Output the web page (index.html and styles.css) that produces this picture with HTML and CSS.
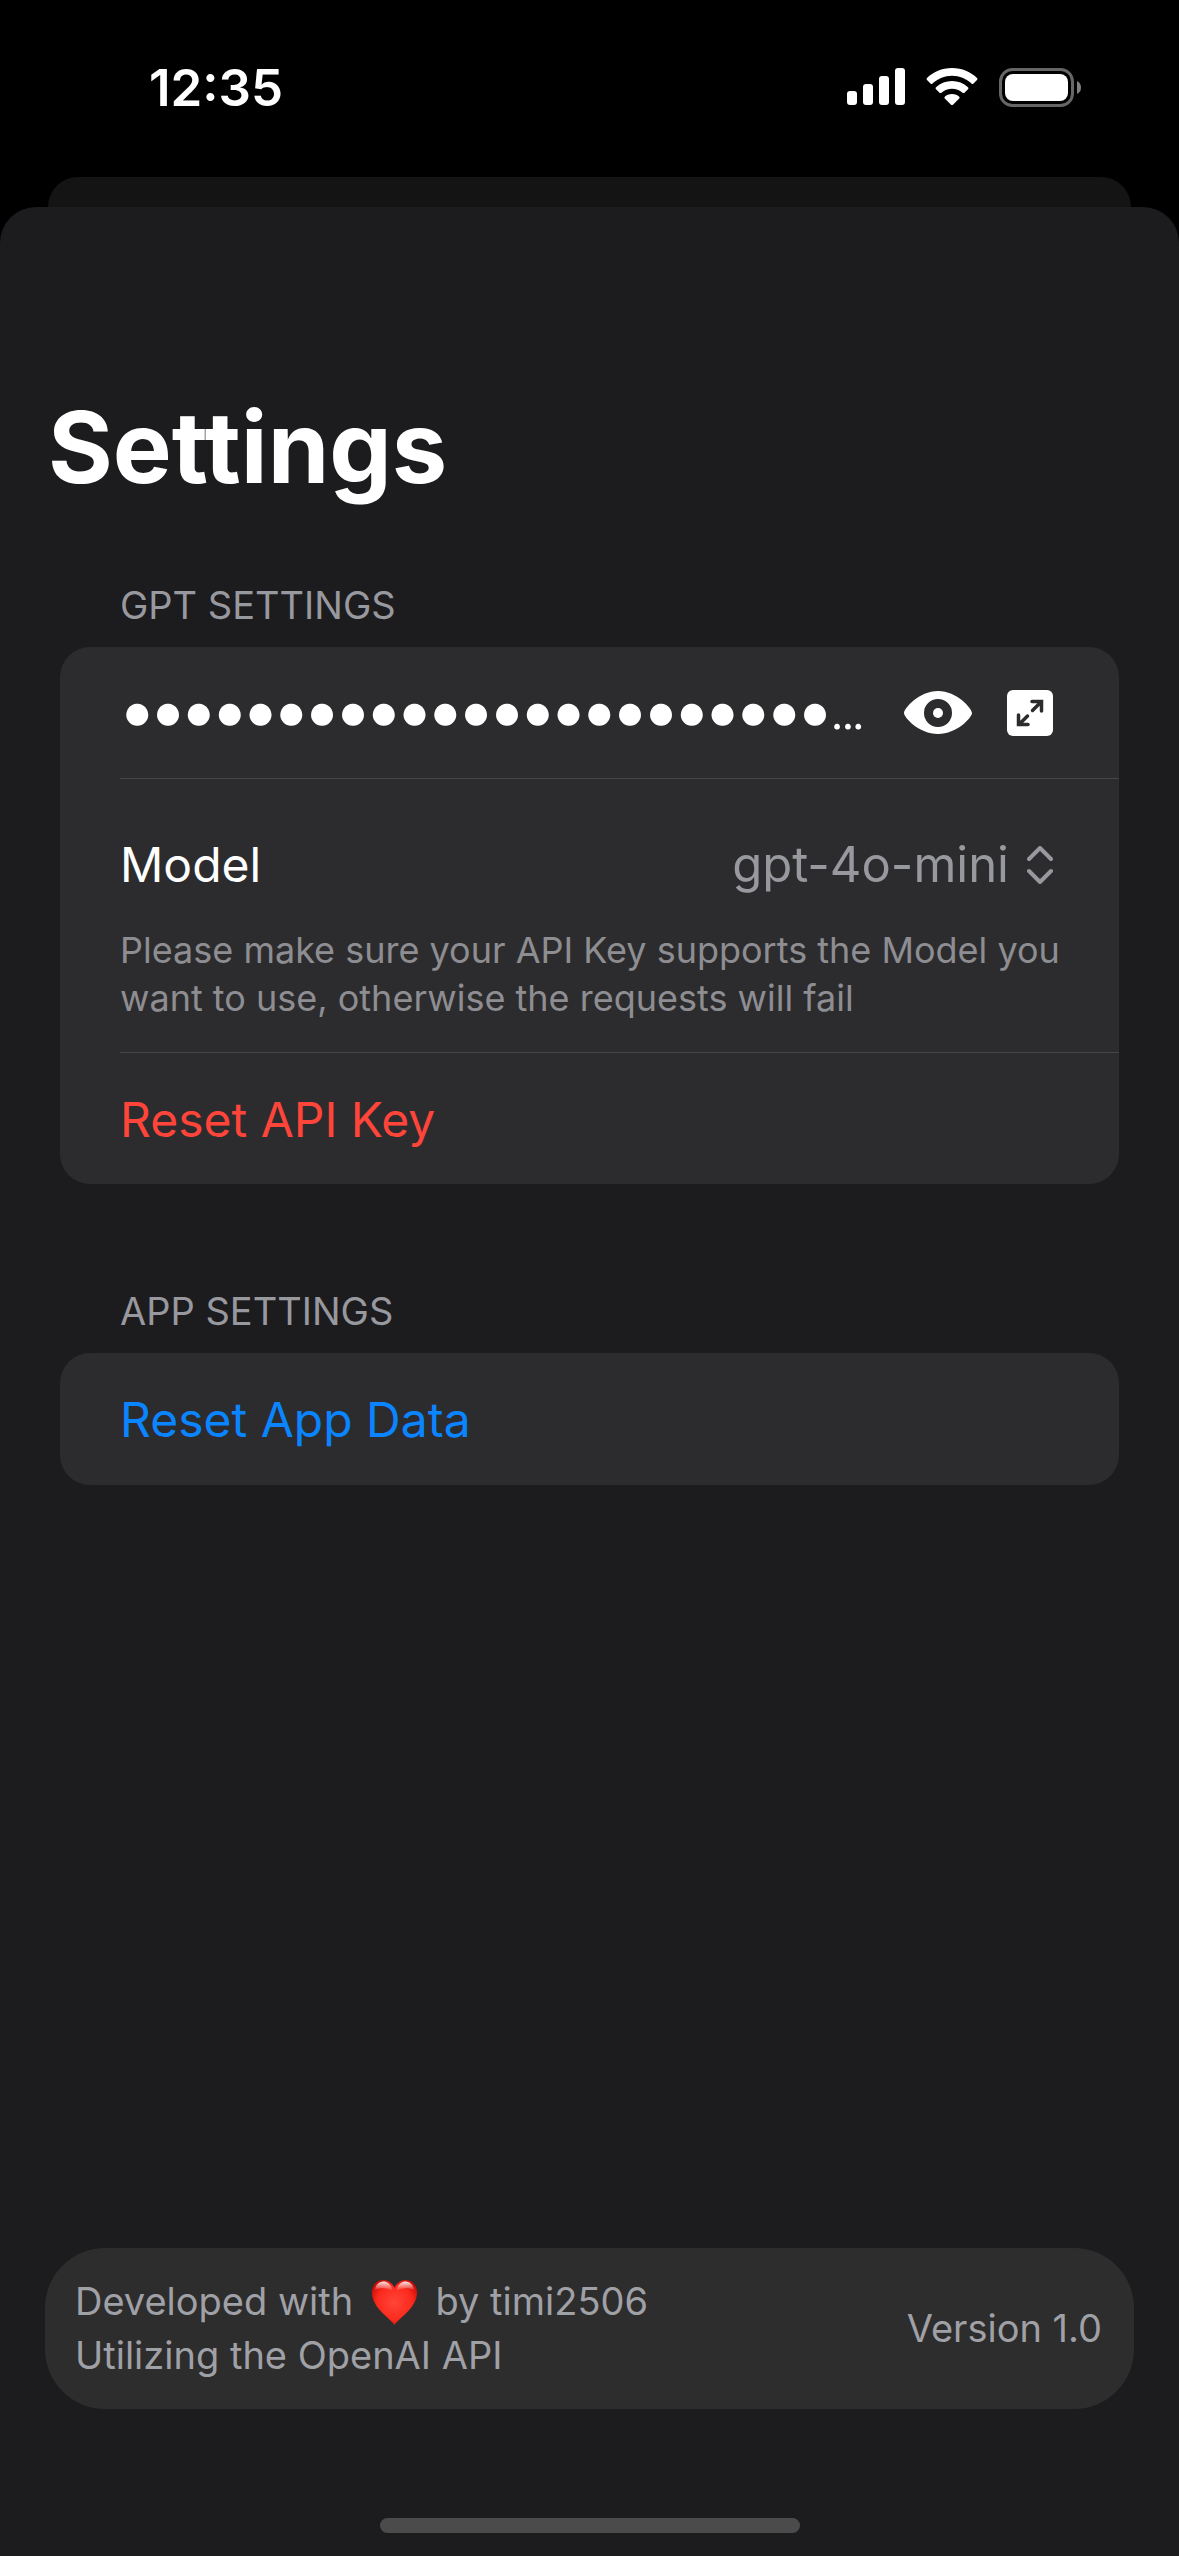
FILE: index.html
```html
<!DOCTYPE html>
<html lang="en">
<head>
<meta charset="utf-8">
<meta name="viewport" content="width=device-width">
<title>Settings</title>
<link rel="stylesheet" href="styles.css">
</head>
<body>
<header class="status-bar">
  <time class="clock">12:35</time>
  <div class="status-icons">
    <svg class="signal" viewBox="0 0 58 40" aria-hidden="true"><rect x="0" y="23" width="10" height="14" rx="3"/><rect x="16" y="16" width="10" height="21" rx="3"/><rect x="32" y="8" width="10" height="29" rx="3"/><rect x="48" y="0" width="10" height="37" rx="3"/></svg>
    <svg class="wifi" viewBox="0 0 52 40" aria-hidden="true"><path d="M26 0C36 0 45 4 51 10Q52 11 51 12L47.500 15.500Q46.500 16.500 45.500 15.500C40 10.500 33.500 7.700 26 7.700S12 10.500 6.500 15.500Q5.500 16.500 4.500 15.500L1 12Q0 11 1 10C7 4 16 0 26 0Z"/><path d="M26 13C32 13 37.500 15.200 42 19.200Q43 20.200 42 21.200L38.500 24.700Q37.500 25.500 36.500 24.700C33.500 22.200 30 20.700 26 20.700S18.500 22.200 15.500 24.700Q14.500 25.500 13.500 24.700L10 21.200Q9 20.200 10 19.200C14.500 15.200 20 13 26 13Z"/><path d="M26 26C29 26 31.500 27 33.200 28.700Q34.200 29.600 33.200 30.600L27 36.700Q26 37.500 25 36.700L18.800 30.600Q17.800 29.600 18.800 28.700C20.500 27 23 26 26 26Z"/></svg>
    <svg class="battery" viewBox="0 0 83 40" aria-hidden="true"><rect x="1.500" y="1.500" width="72" height="36" rx="12" fill="none" stroke="#666" stroke-width="3"/><rect x="6" y="6" width="63" height="27" rx="8"/><path d="M78 13Q82 15 82 19.500T78 26Z" fill="#808080"/></svg>
  </div>
</header>
<div class="sheet-behind"></div>
<main class="sheet">
  <h1 class="title">Settings</h1>
  <section class="group">
    <h2 class="group-title">GPT SETTINGS</h2>
    <div class="card">
      <div class="row key-row">
        <input class="key-field" type="text" aria-label="API Key" value="●●●●●●●●●●●●●●●●●●●●●●●●●●●●●●●●●●●●●●●●" readonly>
        <button class="icon-button" type="button" aria-label="Show API key"><svg class="eye" viewBox="0 0 68 44"><path fill-rule="evenodd" d="M34 0C53 0 68 17.500 68 22S53 43 34 43 0 26.500 0 22 15 0 34 0ZM34 8A14 14 0 1 0 34 36A14 14 0 1 0 34 8Z"/><circle cx="34" cy="22" r="5"/></svg></button>
        <button class="icon-button" type="button" aria-label="Expand API key"><svg class="expand" viewBox="0 0 46 46"><rect width="46" height="46" rx="6"/><path d="M25.500 20.500L34 12M25 11.500H34.500V21M20.500 26L12 34.500M11.500 25V34.500H21" fill="none" stroke="#2c2c2e" stroke-width="3.500" stroke-linecap="round"/></svg></button>
      </div>
      <div class="row model-row">
        <div class="model-line">
          <label for="model">Model</label>
          <span class="picker"><select id="model" class="model-select"><option>gpt-4o-mini</option></select>
          <svg class="chevrons" viewBox="0 0 26 38" aria-hidden="true"><path d="M2 13L13 2L24 13M2 25L13 36L24 25"/></svg></span>
        </div>
        <p class="hint">Please make sure your API Key supports the Model you want to use, otherwise the requests will fail</p>
      </div>
      <button class="row action danger" type="button">Reset API Key</button>
    </div>
  </section>
  <section class="group">
    <h2 class="group-title">APP SETTINGS</h2>
    <div class="card">
      <button class="row action" type="button">Reset App Data</button>
    </div>
  </section>
  <footer class="about">
    <p class="credits">Developed with <svg class="heart" viewBox="0 0 46 46" role="img" aria-label="love"><defs><radialGradient id="heart-body" cx=".5" cy=".5" r=".6"><stop offset="0" stop-color="#ff4538"/><stop offset=".65" stop-color="#fb2a1d"/><stop offset="1" stop-color="#c40a05"/></radialGradient><linearGradient id="heart-shine" x2="0" y2="1"><stop offset="0" stop-color="#fff" stop-opacity=".9"/><stop offset="1" stop-color="#fff" stop-opacity="0"/></linearGradient></defs><path fill="url(#heart-body)" d="M23 46C20 40 0 29 0 13C0 5 5 0 11.500 0C17 0 21 3.500 23 8C25 3.500 29 0 34.500 0C41 0 46 5 46 13C46 29 26 40 23 46Z"/><path fill="url(#heart-shine)" d="M3 10C4 4 8 1.500 12 1.500S20 5 21 11Q12 6 3 10ZM25 11C26 5 30 1.500 34 1.500S42 4 43 10Q34 6 25 11Z"/></svg> by timi2506<br>Utilizing the OpenAI API</p>
    <p class="version">Version 1.0</p>
  </footer>
  <div class="home-indicator"></div>
</main>
</body>
</html>
```

FILE: styles.css
```css
* { box-sizing: border-box; }

body {
  margin: 0;
  min-height: 100vh;
  display: flex;
  flex-direction: column;
  background: #000;
  color: #fff;
  font-family: Inter, "Liberation Sans", sans-serif;
  font-size: 48px;
  line-height: 60px;
}

h1, h2, p { margin: 0; }

button, input, select {
  padding: 0;
  border: 0;
  background: none;
  color: inherit;
  font: inherit;
  appearance: none;
}

svg { display: block; fill: currentColor; }

.status-bar {
  display: flex;
  justify-content: space-between;
  align-items: center;
  height: 177px;
  padding: 0 97px 2px 149px;
}

.clock { font-size: 51px; font-weight: 600; }

.status-icons { display: flex; gap: 21px; }
.signal { width: 58px; height: 40px; }
.wifi { width: 52px; height: 40px; }
.battery { width: 83px; height: 40px; }

.sheet-behind {
  height: 30px;
  margin: 0 48px;
  border-radius: 30px 30px 0 0;
  background: #141414;
}

.sheet {
  flex: 1;
  display: flex;
  flex-direction: column;
  border-radius: 36px 36px 0 0;
  background: #1c1c1e;
}

.title {
  padding: 180px 48px 74px;
  font-size: 99px;
  line-height: 120px;
  font-weight: 700;
}

.group { padding: 0 60px 103px; }

.group-title {
  padding: 0 60px 18px;
  color: #98989f;
  font-size: 38px;
  line-height: 48px;
  font-weight: 400;
}

.card {
  border-radius: 30px;
  background: #2c2c2e;
  overflow: hidden;
}

.row { margin-left: 60px; padding-right: 66px; }
.row + .row { border-top: 1px solid #464649; }

.key-row {
  display: flex;
  align-items: center;
  height: 131px;
}

.key-field {
  flex: 1;
  min-width: 0;
  margin-right: 34px;
  padding: 0 0 2px 2px;
  font-family: Roboto, "Liberation Sans", sans-serif;
  font-size: 51px;
  text-overflow: ellipsis;
}

.icon-button + .icon-button { margin-left: 35px; }
.eye { width: 68px; height: 44px; }
.expand { width: 46px; height: 46px; }

.model-row { padding-top: 56px; padding-bottom: 30px; }

.model-line {
  display: flex;
  justify-content: space-between;
  align-items: center;
}

.picker {
  display: flex;
  align-items: center;
  gap: 18px;
  color: #98989f;
}

.model-select { field-sizing: content; font-size: 49px; }

.chevrons {
  width: 26px;
  height: 38px;
  fill: none;
  stroke: currentColor;
  stroke-width: 4;
  stroke-linecap: round;
  stroke-linejoin: round;
}

.hint {
  margin-top: 31px;
  margin-right: -18px;
  color: #8e8e92;
  font-size: 36px;
  line-height: 48px;
}

.action {
  display: block;
  width: calc(100% - 60px);
  height: 132px;
  padding-top: 2px;
  color: #0a84ff;
  text-align: left;
}

.danger { color: #ff453a; }

.about {
  display: flex;
  justify-content: space-between;
  align-items: center;
  margin: auto 45px 109px;
  padding: 26px 32px 27px 30px;
  border-radius: 60px;
  background: #2d2d2d;
  color: #a0a0a7;
  font-size: 38px;
  line-height: 54px;
}

.heart {
  display: inline-block;
  width: 45px;
  height: 45px;
  margin: 0 8px;
  vertical-align: -10px;
}

.home-indicator {
  width: 420px;
  height: 15px;
  margin: 0 auto 23px;
  border-radius: 8px;
  background: #4b4b4b;
}
```
